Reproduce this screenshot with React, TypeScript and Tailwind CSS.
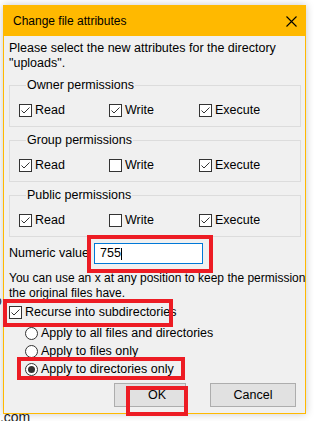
import React from 'react';

const FONT = "font-['Liberation_Sans',Arial,sans-serif]";

function CheckBox({ checked }: { checked: boolean }) {
  return (
    <svg width="13" height="13" viewBox="0 0 13 13" className="shrink-0">
      <rect x="0.5" y="0.5" width="12" height="12" fill="#fff" stroke="#333" />
      {checked && <polyline points="2.5,6.5 5,9 10.5,3.5" fill="none" stroke="#333" strokeWidth="1" />}
    </svg>
  );
}

function Radio({ checked }: { checked: boolean }) {
  return (
    <svg width="13" height="13" viewBox="0 0 13 13" className="shrink-0">
      <circle cx="6.5" cy="6.5" r="6" fill="#fff" stroke="#333" />
      {checked && <circle cx="6.5" cy="6.5" r="3.5" fill="#333" />}
    </svg>
  );
}

function Check({ label, checked }: { label: string; checked: boolean }) {
  return (
    <div className="w-[90px] flex items-center gap-[3px] h-[16px]">
      <CheckBox checked={checked} />
      <span>{label}</span>
    </div>
  );
}

function Group({ title, perms, className }: { title: string; perms: boolean[]; className?: string }) {
  return (
    <fieldset className={`border border-[#DCDCDC] pt-[9px] pb-[8px] pl-[9px] ${className ?? ''}`}>
      <legend className="ml-[7px] px-[1px] leading-[15px]">{title}</legend>
      <div className="flex">
        <Check label="Read" checked={perms[0]} />
        <Check label="Write" checked={perms[1]} />
        <Check label="Execute" checked={perms[2]} />
      </div>
    </fieldset>
  );
}

export default function App() {
  return (
    <div className={`relative w-[314px] h-[421px] overflow-hidden bg-white text-[12.5px] text-black ${FONT}`}>
      {/* page behind the dialog */}
      <div className="absolute left-[-4px] top-[407px] text-[14px] text-[#222]">t.com</div>
      <div className="absolute left-[-5px] top-[292px] text-[12px] text-[#222]">o</div>

      <div className="relative ml-[3px] mt-[5px] w-[303px] h-[409px] border border-[#FFB900] bg-[#F0F0F0] shadow-[0_0_8px_rgba(0,0,0,0.22)] flex flex-col">
        <div className="h-[30px] bg-[#FFB900] flex items-center justify-between pl-[9px] pr-[8px]">
          <span className="text-[12px]">Change file attributes</span>
          <svg width="11" height="11" viewBox="0 0 11 11">
            <path d="M0.5 0.5 L10.5 10.5 M10.5 0.5 L0.5 10.5" stroke="#000" strokeWidth="1.1" />
          </svg>
        </div>

        <div className="pl-[5px] pr-[4px] pt-[5px] leading-[15px] flex flex-col">
          <p>Please select the new attributes for the directory<br />"uploads".</p>

          <Group title="Owner permissions" perms={[true, true, true]} className="mt-[7px]" />
          <Group title="Group permissions" perms={[true, false, true]} className="mt-[6px]" />
          <Group title="Public permissions" perms={[true, false, true]} className="mt-[6px]" />

          <div className="mt-[6px] h-[21px] flex items-center">
            <span className="w-[85px] shrink-0">Numeric value</span>
            <div className="w-[109px] h-[21px] bg-white border border-[#0078D7] flex items-center pl-[5px]">
              <span>755</span>
              <span className="w-px h-[12px] bg-black" />
            </div>
          </div>

          <p className="mt-[7px] whitespace-nowrap text-[12px]">
            You can use an x at any position to keep the permission<br />the original files have.
          </p>

          <div className="mt-[4px] h-[15px] flex items-center gap-[3px]">
            <CheckBox checked />
            <span>Recurse into subdirectories</span>
          </div>

          <div className="mt-[4px] pl-[16px] flex flex-col">
            <div className="h-[18px] flex items-center gap-[3px]"><Radio checked={false} /><span>Apply to all files and directories</span></div>
            <div className="h-[18px] flex items-center gap-[3px]"><Radio checked={false} /><span>Apply to files only</span></div>
            <div className="h-[18px] flex items-center gap-[3px]"><Radio checked /><span>Apply to directories only</span></div>
          </div>

          <div className="mt-[5px] ml-[105px] flex gap-[24px]">
            <button className="w-[72px] h-[24px] bg-[#E1E1E1] border border-[#ADADAD] pl-[14px]">OK</button>
            <button className="w-[86px] h-[24px] bg-[#E1E1E1] border border-[#ADADAD]">Cancel</button>
          </div>
        </div>
      </div>

      {/* red annotation boxes */}
      <div className="absolute left-[87px] top-[235px] w-[126px] h-[38px] border-4 border-[#ED1C24]" />
      <div className="absolute left-[3px] top-[299px] w-[170px] h-[28px] border-4 border-[#ED1C24]" />
      <div className="absolute left-[17px] top-[357px] w-[168px] h-[23px] border-4 border-[#ED1C24]" />
      <div className="absolute left-[126px] top-[386px] w-[62px] h-[30px] border-4 border-[#ED1C24]" />
    </div>
  );
}
